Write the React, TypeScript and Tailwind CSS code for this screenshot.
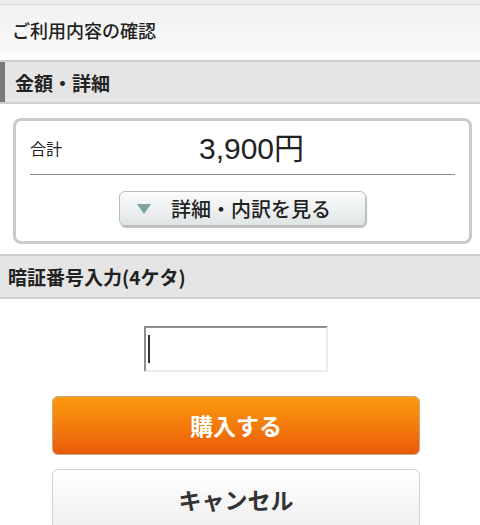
import React from "react";

export default function App() {
  const jp = { fontFamily: '"Noto Sans CJK JP", "Noto Sans", sans-serif' };
  return (
    <div className="w-[480px] h-[525px] overflow-hidden bg-white text-[#222]" style={jp}>
      <div className="h-[4px] bg-[#ececec]" />
      <div className="h-[51px] border-t border-[#d4d4d4] bg-gradient-to-b from-[#f1f1f1] to-[#fafafa] flex items-center pl-[12px] text-[18px] font-medium leading-none">
        ご利用内容の確認
      </div>
      <div className="h-[5px] bg-white" />
      <div className="h-[44px] border-y-2 border-[#cfcfcf] bg-[#e5e5e5] flex items-center">
        <div className="w-[5px] self-stretch bg-[#7a7a7a]" />
        <div className="pl-[10px] text-[19px] font-bold leading-none">金額・詳細</div>
      </div>
      <div className="pl-[13px] pr-[8px] pt-[14px] pb-[10px]">
        <div className="h-[126px] rounded-[8px] border-[3px] border-[#cacaca] bg-white pl-[14px] pr-[14px] flex flex-col">
          <div className="relative h-[54px] border-b border-[#888] flex items-center">
            <span className="absolute left-0 top-[19px] text-[16px] leading-none">合計</span>
            <span className="w-full text-center text-[30px] leading-none pl-[18px]" style={{ fontFamily: '"Liberation Sans", "Noto Sans CJK JP", sans-serif' }}>
              3,900<span style={jp} className="font-normal">円</span>
            </span>
          </div>
          <div className="flex justify-center pt-[16px]">
            <button className="w-[247px] h-[35px] rounded-[6px] border border-[#b9bcbc] bg-gradient-to-b from-[#fbfbfb] via-[#eef1f1] to-[#dfe4e4] shadow-[1px_2px_1px_rgba(0,0,0,0.25)] flex items-center pl-[17px]">
              <svg width="14" height="10" viewBox="0 0 14 10"><polygon points="0,0 14,0 7,10" fill="#7fa3a2" /></svg>
              <span className="ml-[20px] text-[20px] font-medium leading-none text-[#222]">詳細・内訳を見る</span>
            </button>
          </div>
        </div>
      </div>
      <div className="h-[45px] border-y-2 border-[#cfcfcf] bg-[#e5e5e5] flex items-center pl-[8px] text-[19px] font-bold leading-none">
        暗証番号入力(4ケタ)
      </div>
      <div className="flex justify-center pt-[27px] pr-[8px]">
        <div className="w-[184px] h-[46px] border-[2px] border-t-[#8e8e8e] border-l-[#8e8e8e] border-b-[#ececec] border-r-[#ececec] bg-white flex items-center pl-[2px]">
          <div className="w-[2px] h-[28px] bg-[#333]" />
        </div>
      </div>
      <div className="pl-[52px] pt-[24px] flex flex-col gap-[14px]">
        <button className="w-[368px] h-[59px] rounded-[6px] border border-[#c9a58a] bg-gradient-to-b from-[#fc9a0e] to-[#e95a0a] text-white text-[23px] font-bold flex items-center justify-center leading-none">
          購入する
        </button>
        <button className="w-[368px] h-[60px] rounded-[6px] border border-[#cfcfcf] bg-gradient-to-b from-[#ffffff] to-[#efefef] text-[#333] text-[23px] font-bold flex items-center justify-center leading-none">
          キャンセル
        </button>
      </div>
    </div>
  );
}
